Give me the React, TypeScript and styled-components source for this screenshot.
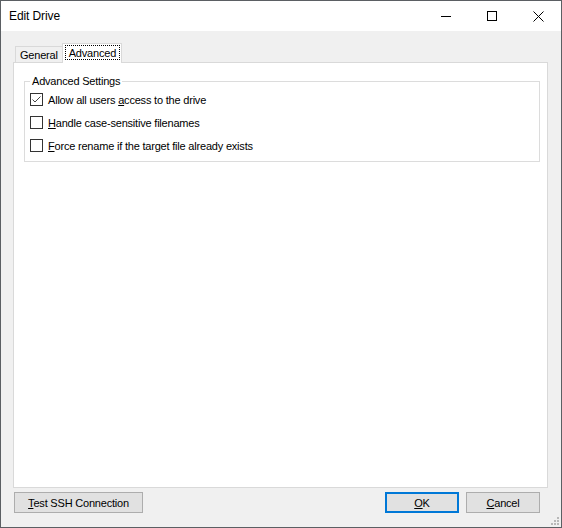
import styled, { createGlobalStyle } from 'styled-components'

const GlobalStyle = createGlobalStyle`
    html, body {
        margin: 0;
        padding: 0;
        background: #ffffff;
    }
    body {
        font-family: "Liberation Sans", Arial, sans-serif;
        color: #000;
    }
`

const Window = styled.div`
    width: 562px;
    height: 528px;
    box-sizing: border-box;
    border: 1px solid #5b5f63;
    display: flex;
    flex-direction: column;
    position: relative;
    overflow: hidden;
`

const TitleBar = styled.div`
    height: 30px;
    flex: none;
    background: #ffffff;
    display: flex;
    align-items: center;
    padding-left: 8px;
`

const Title = styled.div`
    flex: 1;
    font-size: 12px;
    letter-spacing: -0.1px;
`

const CaptionButton = styled.div`
    width: 46px;
    height: 30px;
    display: flex;
    align-items: center;
    justify-content: center;
`

const Body = styled.div`
    flex: 1;
    min-height: 0;
    background: #f0f0f0;
    display: flex;
    flex-direction: column;
    padding: 11px 13px 14px 12px;
    font-size: 11px;
    letter-spacing: -0.2px;
`

const TabStrip = styled.div`
    height: 20px;
    flex: none;
    display: flex;
    align-items: flex-end;
    padding-left: 2px;
`

const Tab = styled.div<{ $active?: boolean }>`
    box-sizing: border-box;
    border: 1px solid #d9d9d9;
    border-bottom: none;
    display: flex;
    align-items: center;
    position: relative;
    z-index: 1;
    ${(p) =>
        p.$active
            ? `
        height: 20px;
        margin-bottom: -1px;
        background: #ffffff;
        padding: 1px 1px 3px 2px;
    `
            : `
        height: 16px;
        background: #f0f0f0;
        padding: 1px 4px 0 4px;
        border-right: none;
    `}
`

const FocusRing = styled.span`
    box-sizing: border-box;
    border: 1px dotted #000;
    padding: 1px 3px 0;
    height: 15px;
    line-height: 13px;
`

const Panel = styled.div`
    flex: 1;
    min-height: 0;
    background: #ffffff;
    border: 1px solid #d9d9d9;
    display: flex;
    flex-direction: column;
`

const GroupBox = styled.fieldset`
    margin: 12px 7px 0 10px;
    padding: 0 0 4px 5px;
    border: 1px solid #dcdcdc;
    min-width: 0;
`

const Legend = styled.legend`
    padding: 0 2px;
    margin-left: 0;
    line-height: 13px;
`

const CheckRow = styled.label`
    height: 23px;
    display: flex;
    align-items: center;
    gap: 5px;
`

const Box = styled.span`
    width: 13px;
    height: 13px;
    box-sizing: border-box;
    border: 1px solid #333333;
    background: #ffffff;
    display: flex;
    align-items: center;
    justify-content: center;
    flex: none;
`

const Footer = styled.div`
    flex: none;
    margin-top: 4px;
    display: flex;
    align-items: center;
    padding: 0 8px 0 1px;
    gap: 7px;
`

const Spacer = styled.div`
    flex: 1;
`

const Button = styled.div<{ $width: number; $default?: boolean }>`
    width: ${(p) => p.$width}px;
    height: 21px;
    box-sizing: border-box;
    background: #e1e1e1;
    border: ${(p) => (p.$default ? '2px solid #0078d7' : '1px solid #adadad')};
    display: flex;
    align-items: center;
    justify-content: center;
`

const Grip = styled.svg`
    position: absolute;
    right: 1px;
    bottom: 1px;
`

const CheckBox = ({ checked }: { checked?: boolean }) => (
    <Box>
        {checked && (
            <svg width="11" height="11" viewBox="0 0 11 11">
                <path d="M1.5 5.5 L4 8 L9.5 2.5" fill="none" stroke="#444" strokeWidth="1" />
            </svg>
        )}
    </Box>
)

const App = () => {
    return (
        <>
            <GlobalStyle />
            <Window>
                <TitleBar>
                    <Title>Edit Drive</Title>
                    <CaptionButton>
                        <svg width="10" height="10" viewBox="0 0 10 10">
                            <path d="M0 5.5 H10" stroke="#000" strokeWidth="1" />
                        </svg>
                    </CaptionButton>
                    <CaptionButton>
                        <svg width="10" height="10" viewBox="0 0 10 10">
                            <rect x="0.5" y="0.5" width="9" height="9" fill="none" stroke="#000" strokeWidth="1" />
                        </svg>
                    </CaptionButton>
                    <CaptionButton>
                        <svg width="11" height="11" viewBox="0 0 11 11">
                            <path d="M0.5 0.5 L10.5 10.5 M10.5 0.5 L0.5 10.5" stroke="#000" strokeWidth="1" />
                        </svg>
                    </CaptionButton>
                </TitleBar>
                <Body>
                    <TabStrip>
                        <Tab>General</Tab>
                        <Tab $active>
                            <FocusRing>Advanced</FocusRing>
                        </Tab>
                    </TabStrip>
                    <Panel>
                        <GroupBox>
                            <Legend>Advanced Settings</Legend>
                            <CheckRow>
                                <CheckBox checked />
                                <span>
                                    Allow all users <u>a</u>ccess to the drive
                                </span>
                            </CheckRow>
                            <CheckRow>
                                <CheckBox />
                                <span>
                                    <u>H</u>andle case-sensitive filenames
                                </span>
                            </CheckRow>
                            <CheckRow>
                                <CheckBox />
                                <span>
                                    <u>F</u>orce rename if the target file already exists
                                </span>
                            </CheckRow>
                        </GroupBox>
                    </Panel>
                    <Footer>
                        <Button $width={129}>
                            <span>
                                <u>T</u>est SSH Connection
                            </span>
                        </Button>
                        <Spacer />
                        <Button $width={74} $default>
                            <span>
                                <u>O</u>K
                            </span>
                        </Button>
                        <Button $width={74}>
                            <span>
                                <u>C</u>ancel
                            </span>
                        </Button>
                    </Footer>
                </Body>
                <Grip width="10" height="10" viewBox="0 0 10 10">
                    <rect x="7" y="1" width="2" height="2" fill="#b8b8b8" />
                    <rect x="4" y="4" width="2" height="2" fill="#b8b8b8" />
                    <rect x="7" y="4" width="2" height="2" fill="#b8b8b8" />
                    <rect x="1" y="7" width="2" height="2" fill="#b8b8b8" />
                    <rect x="4" y="7" width="2" height="2" fill="#b8b8b8" />
                    <rect x="7" y="7" width="2" height="2" fill="#b8b8b8" />
                </Grip>
            </Window>
        </>
    )
}

export default App
